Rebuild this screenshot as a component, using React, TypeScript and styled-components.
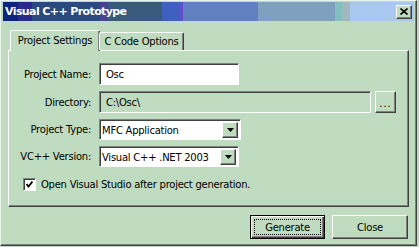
import React from "react";
import styled, { createGlobalStyle, css } from "styled-components";

const BG = "#c0dcc0";
const DARK = "#404040";
const SHADOW = "#808080";
const LIGHT = "#ffffff";

const GlobalStyle = createGlobalStyle`
  html, body { margin: 0; padding: 0; background: ${BG}; }
  body { font-family: "DejaVu Sans", "Liberation Sans", sans-serif; font-size: 10px; letter-spacing: -0.25px; color: #000; }
  * { box-sizing: border-box; }
`;

const raised = css`
  border-style: solid;
  border-width: 1px;
  border-color: ${LIGHT} ${DARK} ${DARK} ${LIGHT};
  box-shadow: inset -1px -1px 0 ${SHADOW};
`;

const sunken = css`
  border-style: solid;
  border-width: 1px;
  border-color: ${SHADOW} ${LIGHT} ${LIGHT} ${SHADOW};
  box-shadow: inset 1px 1px 0 ${DARK};
`;

const Window = styled.div`
  width: 417px;
  height: 246px;
  background: ${BG};
  border-style: solid;
  border-width: 1px;
  border-color: #e8f4e8 ${DARK} ${DARK} #e8f4e8;
  box-shadow: inset -1px -1px 0 ${SHADOW};
  padding: 1px 2px 0 2px;
  display: flex;
  flex-direction: column;
`;

const TitleBar = styled.div`
  height: 19px;
  display: flex;
  align-items: center;
  justify-content: space-between;
  padding: 0 2px 0 2px;
  background: linear-gradient(
    to right,
    #0a2480 0px, #0a2480 15px,
    #2a2a88 15px, #2a2a88 29px,
    #2a4a7c 29px, #2a4a7c 97px,
    #48448c 97px, #48448c 105px,
    #3a5a7c 105px, #3a5a7c 159px,
    #4060c0 159px, #4060c0 177px,
    #6050c8 177px, #6050c8 180px,
    #6080c0 180px, #6080c0 255px,
    #80a0c0 255px, #80a0c0 332px,
    #80c0c0 332px, #80c0c0 339px,
    #a0b8c0 339px, #a0b8c0 347px,
    #a8c8f0 347px
  );
`;

const TitleText = styled.span`
  color: #fff;
  font-family: "DejaVu Sans", sans-serif;
  font-weight: bold;
  font-size: 11px;
  letter-spacing: -0.6px;
`;

const CloseBox = styled.div`
  width: 16px;
  height: 14px;
  background: ${BG};
  ${raised};
  display: flex;
  align-items: center;
  justify-content: center;
`;

const Body = styled.div`
  flex: 1;
  display: flex;
  flex-direction: column;
  padding: 9px 5px 0 5px;
`;

const TabStrip = styled.div`
  display: flex;
  align-items: flex-end;
  height: 20px;
  padding-left: 2px;
  position: relative;
  z-index: 1;
`;

const Tab = styled.div<{ $active?: boolean }>`
  background: ${BG};
  border-style: solid;
  border-width: 1px 1px 0 1px;
  border-color: ${LIGHT} ${DARK} transparent ${LIGHT};
  box-shadow: inset -1px 0 0 ${SHADOW};
  border-radius: 2px 2px 0 0;
  display: flex;
  align-items: center;
  justify-content: center;
  height: ${(p) => (p.$active ? "21px" : "18px")};
  margin-bottom: ${(p) => (p.$active ? "-1px" : "0")};
  padding: ${(p) => (p.$active ? "0 0 2px 0" : "0")};
  width: ${(p) => (p.$active ? "90px" : "85px")};
  margin-left: ${(p) => (p.$active ? "0" : "-1px")};
  white-space: nowrap;
`;

const Panel = styled.div`
  width: 401px;
  height: 157px;
  ${raised};
  padding: 12px 0 0 0;
  display: flex;
  flex-direction: column;
`;

const Form = styled.div`
  display: grid;
  grid-template-columns: 82px auto;
  column-gap: 8px;
  row-gap: 6px;
  align-items: center;
`;

const Label = styled.label`
  text-align: right;
  white-space: nowrap;
`;

const Field = styled.div`
  display: flex;
  align-items: center;
  gap: 4px;
`;

const TextBox = styled.div<{ $width: number; $disabled?: boolean }>`
  width: ${(p) => p.$width}px;
  height: 22px;
  ${sunken};
  background: ${(p) => (p.$disabled ? BG : "#fff")};
  display: flex;
  align-items: center;
  padding-left: 6px;
  white-space: nowrap;
`;

const SmallButton = styled.div`
  width: 21px;
  height: 22px;
  ${raised};
  display: flex;
  align-items: center;
  justify-content: center;
  padding-top: 2px;
  letter-spacing: 1px;
`;

const Select = styled.div<{ $width: number }>`
  width: ${(p) => p.$width}px;
  height: 21px;
  ${sunken};
  background: #fff;
  display: flex;
  align-items: stretch;
  padding: 2px 2px 1px 2px;
`;

const SelectValue = styled.div`
  flex: 1;
  display: flex;
  align-items: center;
  white-space: nowrap;
`;

const ArrowButton = styled.div`
  width: 16px;
  background: ${BG};
  ${raised};
  display: flex;
  align-items: center;
  justify-content: center;
`;

const CheckRow = styled.div`
  display: flex;
  align-items: center;
  gap: 5px;
  margin: 11px 0 0 14px;
`;

const CheckBox = styled.div`
  width: 13px;
  height: 13px;
  ${sunken};
  background: #fff;
  display: flex;
  align-items: center;
  justify-content: center;
`;

const Footer = styled.div`
  display: flex;
  justify-content: flex-end;
  gap: 7px;
  padding: 8px 1px 0 0;
`;

const Button = styled.div<{ $default?: boolean }>`
  width: ${(p) => (p.$default ? "75px" : "76px")};
  height: 24px;
  background: ${BG};
  display: flex;
  align-items: center;
  justify-content: center;
  ${(p) =>
    p.$default
      ? css`
          border: 1px solid #000;
          box-shadow: inset 1px 1px 0 ${LIGHT}, inset -1px -1px 0 ${DARK}, inset -2px -2px 0 ${SHADOW};
          padding: 3px;
        `
      : raised}
`;

const Focus = styled.span`
  flex: 1;
  align-self: stretch;
  display: flex;
  align-items: center;
  justify-content: center;
  border: 1px dotted #000;
`;

const Arrow = () => (
  <svg width="7" height="4" viewBox="0 0 7 4">
    <path d="M0 0h7L3.5 4z" fill="#000" />
  </svg>
);

export default function App() {
  return (
    <>
      <GlobalStyle />
      <Window>
        <TitleBar>
          <TitleText>Visual C++ Prototype</TitleText>
          <CloseBox>
            <svg width="8" height="7" viewBox="0 0 8 7">
              <path d="M0.5 0.5L7.5 6.5M7.5 0.5L0.5 6.5" stroke="#000" strokeWidth="1.6" />
            </svg>
          </CloseBox>
        </TitleBar>
        <Body>
          <TabStrip>
            <Tab $active>Project Settings</Tab>
            <Tab>C Code Options</Tab>
          </TabStrip>
          <Panel>
            <Form>
              <Label>Project Name:</Label>
              <Field>
                <TextBox $width={140}>Osc</TextBox>
              </Field>
              <Label>Directory:</Label>
              <Field>
                <TextBox $width={272} $disabled>C:\Osc\</TextBox>
                <SmallButton>...</SmallButton>
              </Field>
              <Label>Project Type:</Label>
              <Field>
                <Select $width={142}>
                  <SelectValue>MFC Application</SelectValue>
                  <ArrowButton>
                    <Arrow />
                  </ArrowButton>
                </Select>
              </Field>
              <Label>VC++ Version:</Label>
              <Field>
                <Select $width={140}>
                  <SelectValue>Visual C++ .NET 2003</SelectValue>
                  <ArrowButton>
                    <Arrow />
                  </ArrowButton>
                </Select>
              </Field>
            </Form>
            <CheckRow>
              <CheckBox>
                <svg width="7" height="7" viewBox="0 0 7 7">
                  <path d="M0.5 3L2.5 5.5L6.5 0.5" stroke="#000" strokeWidth="1.8" fill="none" />
                </svg>
              </CheckBox>
              <span>Open Visual Studio after project generation.</span>
            </CheckRow>
          </Panel>
          <Footer>
            <Button $default>
              <Focus>Generate</Focus>
            </Button>
            <Button>Close</Button>
          </Footer>
        </Body>
      </Window>
    </>
  );
}
